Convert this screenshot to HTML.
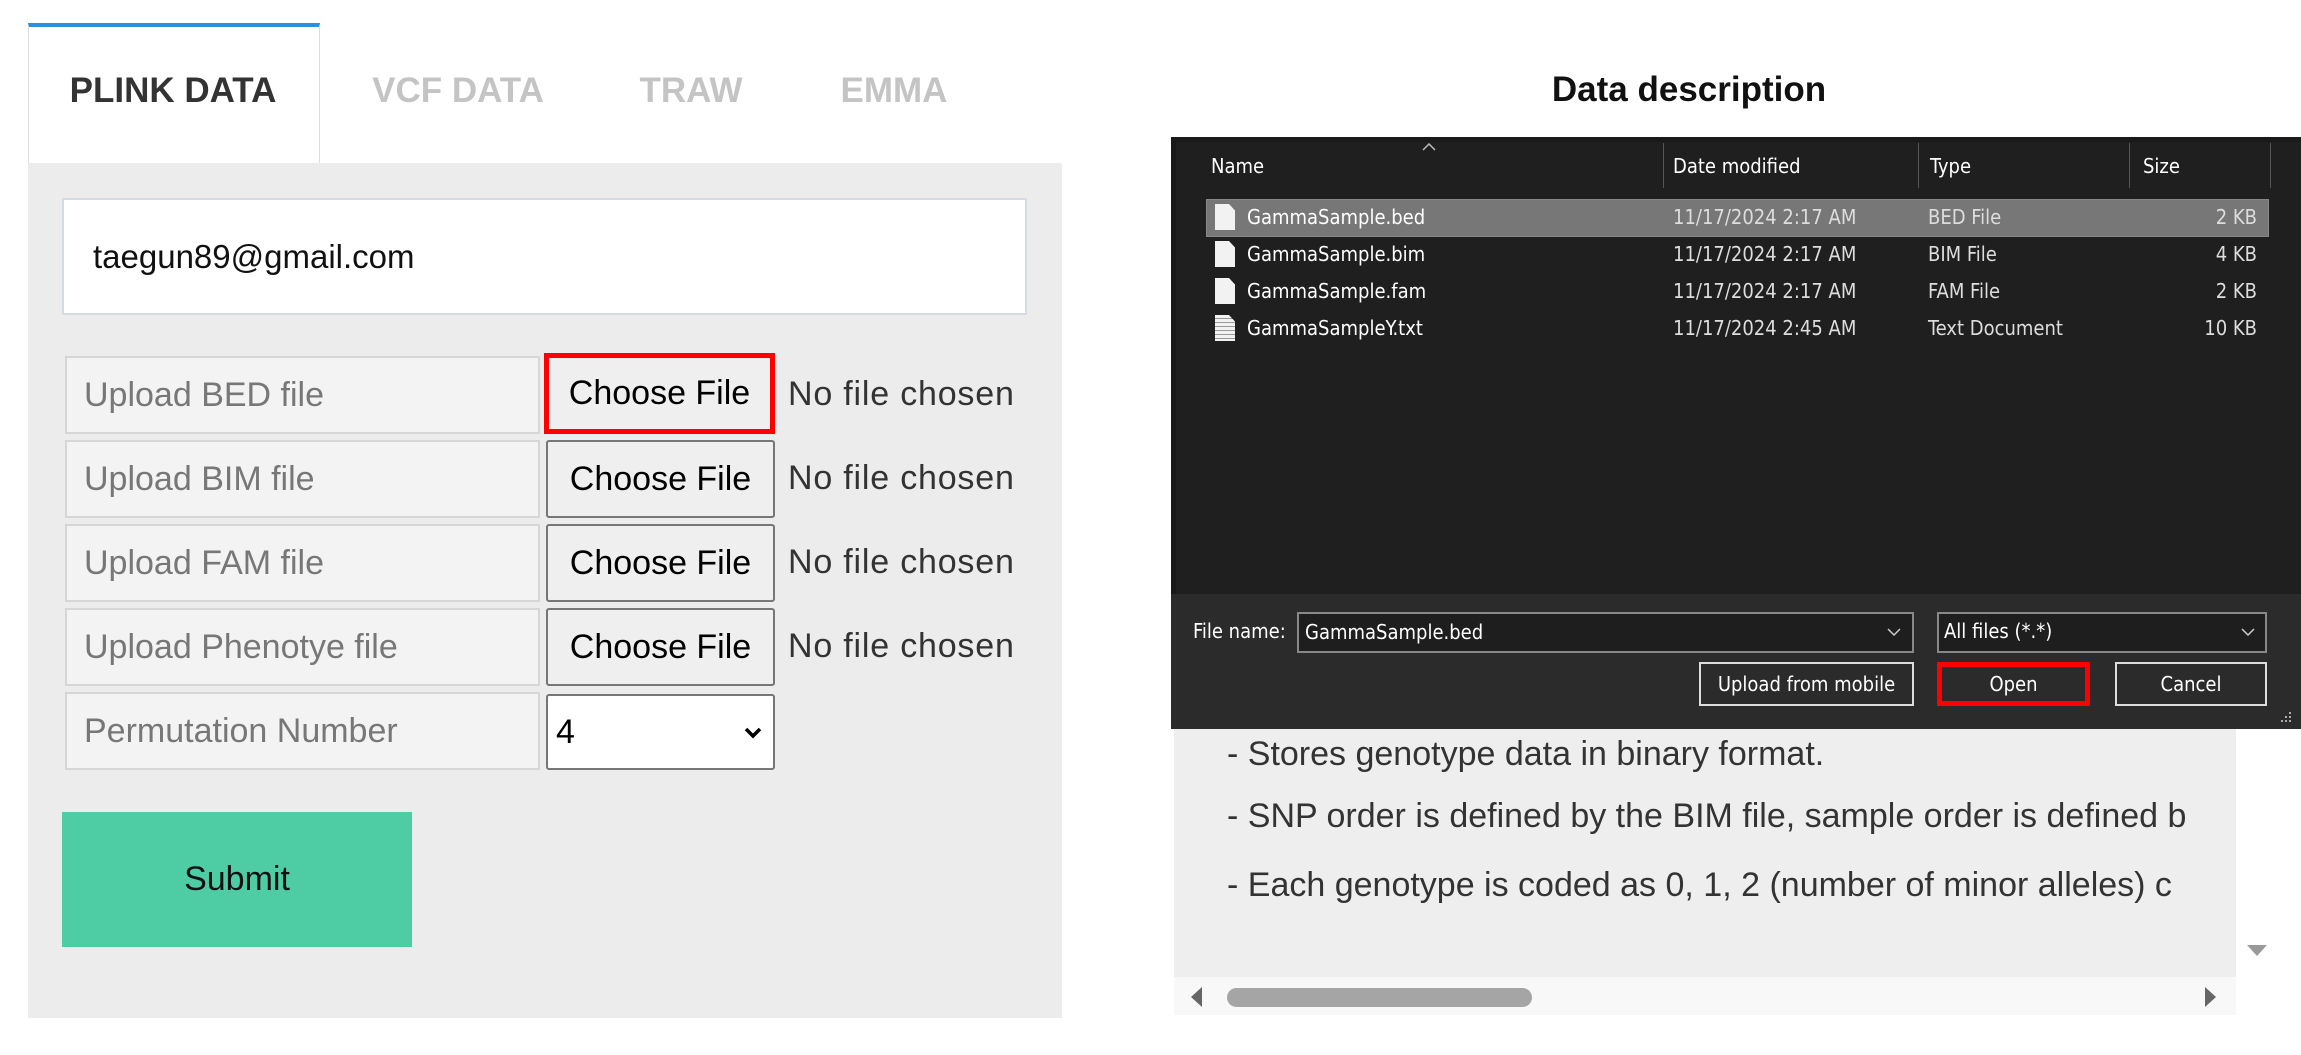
<!DOCTYPE html>
<html><head><meta charset="utf-8"><style>
*{box-sizing:border-box;margin:0;padding:0}
body{width:2301px;height:1055px;background:#fff;position:relative;overflow:hidden;font-family:"Liberation Sans",sans-serif}
.a{position:absolute}
.tab{position:absolute;top:71px;font-weight:bold;font-size:35px;color:#c4c4c4;transform:translateX(-50%);white-space:nowrap}
.lbl{position:absolute;left:65px;width:475px;background:#f3f3f3;border:2px solid #d6d6d6;color:#777;font-size:34px;padding-left:17px;display:flex;align-items:center}
.btn{position:absolute;left:546px;width:229px;background:#efefef;border:2px solid #767676;border-radius:3px;font-size:34px;color:#000;display:flex;align-items:center;justify-content:center}
.nf{position:absolute;left:788px;font-size:34px;color:#333;letter-spacing:0.8px}
.d{font-family:"DejaVu Sans Condensed","Liberation Sans",sans-serif;font-size:20px;color:#fff;position:absolute}
.dbtn{position:absolute;top:662px;height:44px;border:2px solid #ddd;color:#fff;font-family:"DejaVu Sans Condensed","Liberation Sans",sans-serif;font-size:20px;display:flex;align-items:center;justify-content:center;background:#2b2b2b}
.ic{position:absolute;left:1215px;width:20px;height:26px;background:#f2f2f2;clip-path:polygon(0 0,70% 0,100% 25%,100% 100%,0 100%)}
.desc{position:absolute;left:1227px;font-size:34px;color:#333;white-space:nowrap}
</style></head><body>
<div class="a" style="left:28px;top:23px;width:292px;height:141px;border:1px solid #ddd;border-top:4px solid #2e8fdc;border-bottom:none;background:#fff"></div>
<div class="tab" style="left:173px;color:#333">PLINK DATA</div>
<div class="tab" style="left:458px">VCF DATA</div>
<div class="tab" style="left:691px">TRAW</div>
<div class="tab" style="left:894px">EMMA</div>
<div class="a" style="left:28px;top:163px;width:1034px;height:855px;background:#ececec"></div>
<div class="a" style="left:62px;top:198px;width:965px;height:117px;background:#fff;border:2px solid #d5dbe2;font-size:33px;color:#111;padding-left:29px;display:flex;align-items:center">taegun89@gmail.com</div>

<div class="lbl" style="top:356px;height:78px">Upload BED file</div>
<div class="lbl" style="top:440px;height:78px">Upload BIM file</div>
<div class="lbl" style="top:524px;height:78px">Upload FAM file</div>
<div class="lbl" style="top:608px;height:78px">Upload Phenotye file</div>
<div class="lbl" style="top:692px;height:78px">Permutation Number</div>

<div class="btn" style="top:353px;height:81px;border:5px solid #f00;border-radius:0;left:544px;width:231px">Choose File</div>
<div class="btn" style="top:440px;height:78px">Choose File</div>
<div class="btn" style="top:524px;height:78px">Choose File</div>
<div class="btn" style="top:608px;height:78px">Choose File</div>
<div class="nf" style="top:375px">No file chosen</div>
<div class="nf" style="top:459px">No file chosen</div>
<div class="nf" style="top:543px">No file chosen</div>
<div class="nf" style="top:627px">No file chosen</div>
<div class="a" style="left:546px;top:694px;width:229px;height:76px;background:#fff;border:2px solid #767676;border-radius:3px;font-size:34px;padding-left:8px;display:flex;align-items:center">4
<svg class="a" style="right:10px;top:30px" width="20" height="14" viewBox="0 0 20 14"><path d="M3 3l7 7 7-7" stroke="#000" stroke-width="3.5" fill="none"/></svg></div>
<div class="a" style="left:62px;top:812px;width:350px;height:135px;background:#4ecca3;font-size:34px;color:#111;display:flex;align-items:center;justify-content:center">Submit</div>

<div class="a" style="left:1689px;top:70px;transform:translateX(-50%);font-weight:bold;font-size:35px;color:#111;white-space:nowrap">Data description</div>

<div class="a" style="left:1174px;top:729px;width:1062px;height:248px;background:#eeeeee"></div>
<div class="desc" style="top:735px">- Stores genotype data in binary format.</div>
<div class="desc" style="top:797px">- SNP order is defined by the BIM file, sample order is defined b</div>
<div class="desc" style="top:866px">- Each genotype is coded as 0, 1, 2 (number of minor alleles) c</div>
<div class="a" style="left:2236px;top:729px;width:65px;height:300px;background:#fff"></div>
<svg class="a" style="left:2247px;top:945px" width="20" height="12"><path d="M0 0h20L10 11z" fill="#999"/></svg>
<div class="a" style="left:1174px;top:977px;width:1062px;height:38px;background:#f8f8f8"></div>
<div class="a" style="left:1227px;top:988px;width:305px;height:19px;background:#a5a5a5;border-radius:10px"></div>
<svg class="a" style="left:1191px;top:987px" width="12" height="20"><path d="M11 0v20L0 10z" fill="#666"/></svg>
<svg class="a" style="left:2205px;top:987px" width="12" height="20"><path d="M0 0v20l11-10z" fill="#666"/></svg>

<div class="a" style="left:1171px;top:137px;width:1130px;height:457px;background:#1f1f1f;border-top:5px solid #1a1a1a;border-left:5px solid #191919"></div>
<div class="a" style="left:1171px;top:594px;width:1130px;height:135px;background:#2b2b2b"></div>
<svg class="a" style="left:2281px;top:712px" width="12" height="12"><g fill="#aaa"><rect x="8" y="0" width="2" height="2"/><rect x="4" y="4" width="2" height="2"/><rect x="8" y="4" width="2" height="2"/><rect x="0" y="8" width="2" height="2"/><rect x="4" y="8" width="2" height="2"/><rect x="8" y="8" width="2" height="2"/></g></svg>
<div class="d" style="left:1211px;top:154px">Name</div>
<svg class="a" style="left:1422px;top:143px" width="14" height="8"><path d="M1 7l6-6 6 6" stroke="#bbb" fill="none" stroke-width="1.5"/></svg>
<div class="d" style="left:1673px;top:154px">Date modified</div>
<div class="d" style="left:1930px;top:154px">Type</div>
<div class="d" style="left:2143px;top:154px">Size</div>
<div class="a" style="left:1663px;top:143px;width:1px;height:45px;background:#555"></div>
<div class="a" style="left:1918px;top:143px;width:1px;height:45px;background:#555"></div>
<div class="a" style="left:2129px;top:143px;width:1px;height:45px;background:#555"></div>
<div class="a" style="left:2270px;top:143px;width:1px;height:45px;background:#555"></div>
<div class="a" style="left:1206px;top:199px;width:1063px;height:38px;background:#777;border:1px solid #888"></div>
<div class="ic" style="top:204px"></div><div class="ic" style="top:241px"></div><div class="ic" style="top:278px"></div><div class="ic" style="top:315px;background:repeating-linear-gradient(#f2f2f2 0 3px,#999 3px 4px)"></div>
<div class="d" style="left:1247px;top:205px">GammaSample.bed</div>
<div class="d" style="left:1247px;top:242px">GammaSample.bim</div>
<div class="d" style="left:1247px;top:279px">GammaSample.fam</div>
<div class="d" style="left:1247px;top:316px">GammaSampleY.txt</div>
<div class="d" style="left:1673px;top:205px;color:#ddd">11/17/2024 2:17 AM</div>
<div class="d" style="left:1673px;top:242px;color:#ddd">11/17/2024 2:17 AM</div>
<div class="d" style="left:1673px;top:279px;color:#ddd">11/17/2024 2:17 AM</div>
<div class="d" style="left:1673px;top:316px;color:#ddd">11/17/2024 2:45 AM</div>
<div class="d" style="left:1928px;top:205px;color:#ddd">BED File</div>
<div class="d" style="left:1928px;top:242px;color:#ddd">BIM File</div>
<div class="d" style="left:1928px;top:279px;color:#ddd">FAM File</div>
<div class="d" style="left:1928px;top:316px;color:#ddd">Text Document</div>
<div class="d" style="right:44px;top:205px;color:#ddd">2 KB</div>
<div class="d" style="right:44px;top:242px;color:#ddd">4 KB</div>
<div class="d" style="right:44px;top:279px;color:#ddd">2 KB</div>
<div class="d" style="right:44px;top:316px;color:#ddd">10 KB</div>

<div class="d" style="left:1193px;top:619px">File name:</div>
<div class="a" style="left:1297px;top:612px;width:617px;height:41px;border:2px solid #888;background:#1e1e1e"></div>
<div class="d" style="left:1305px;top:620px">GammaSample.bed</div>
<svg class="a" style="left:1887px;top:628px" width="14" height="8"><path d="M1 1l6 6 6-6" stroke="#ccc" fill="none" stroke-width="1.5"/></svg>
<div class="a" style="left:1937px;top:612px;width:330px;height:41px;border:2px solid #888;background:#1e1e1e"></div>
<div class="d" style="left:1944px;top:619px">All files (*.*)</div>
<svg class="a" style="left:2241px;top:628px" width="14" height="8"><path d="M1 1l6 6 6-6" stroke="#ccc" fill="none" stroke-width="1.5"/></svg>
<div class="dbtn" style="left:1699px;width:215px">Upload from mobile</div>
<div class="dbtn" style="left:1937px;width:153px;border:5px solid #f00">Open</div>
<div class="dbtn" style="left:2115px;width:152px">Cancel</div>
</body></html>
